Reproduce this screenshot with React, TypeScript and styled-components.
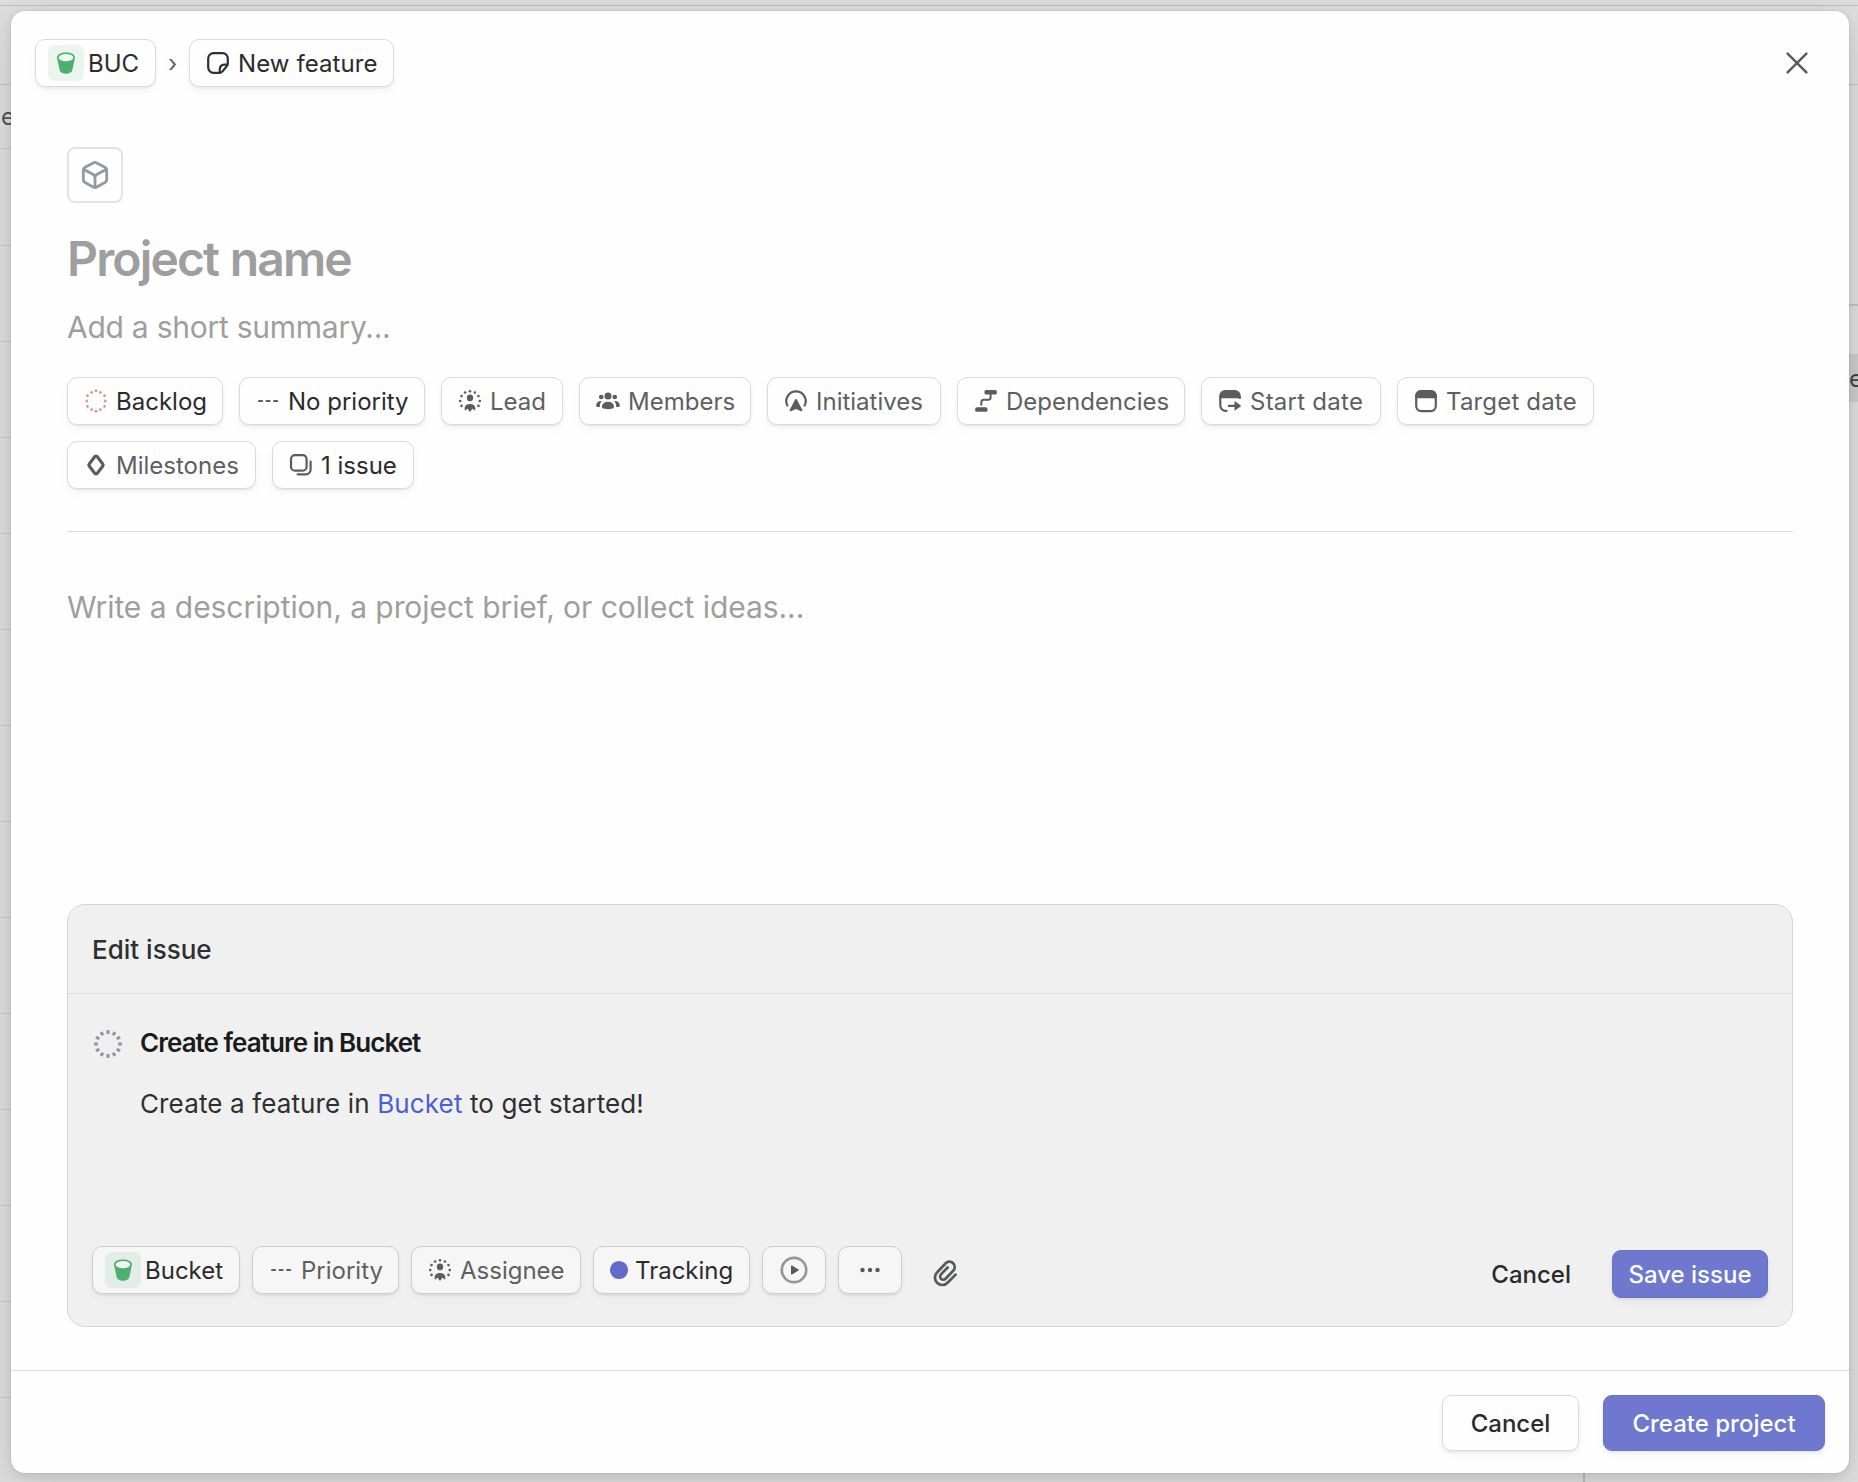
import React from "react";
import styled, { createGlobalStyle } from "styled-components";

const Global = createGlobalStyle`
  *, *::before, *::after { box-sizing: border-box; }
  html, body { margin: 0; padding: 0; overflow: hidden; }
  body {
    font-family: Inter, "Liberation Sans", sans-serif;
    color: #2f2f31;
    -webkit-font-smoothing: antialiased;
  }
`;

/* ---------- page behind the dialog ---------- */

const Page = styled.div`
  position: relative;
  display: flex;
  flex-direction: column;
  width: 1858px;
  height: 1482px;
  overflow: hidden;
  background: #dedede;
`;
const TopStrip = styled.div`
  height: 6px;
  flex: none;
  border-bottom: 1px solid #c0c0c1;
`;
const TitleStrip = styled.div`
  height: 79px;
  flex: none;
  border-bottom: 1px solid #c4c4c5;
`;
const Columns = styled.div`
  flex: 1;
  display: flex;
  min-height: 0;
`;
const List = styled.div`
  width: 1583px;
  flex: none;
  display: flex;
  flex-direction: column;
`;
const ListRow = styled.div<{ $h: number }>`
  height: ${(p) => p.$h}px;
  flex: none;
  display: flex;
  align-items: center;
  padding-left: 1px;
  font-size: 24px;
  color: #555;
  border-bottom: 1px solid #c8c8c9;
`;
const Side = styled.div`
  flex: 1;
  border-left: 2px solid #b9b9ba;
`;
const SideTop = styled.div`
  height: 221px;
  border-bottom: 2px solid #c0c0c1;
`;
const SideCell = styled.div`
  height: 48px;
  margin-top: 48px;
  display: flex;
  align-items: center;
  padding-left: 264px;
  font-size: 24px;
  color: #444;
  background: #cbcbcb;
`;

/* ---------- dialog ---------- */

const Overlay = styled.div`
  position: absolute;
  inset: 0;
  display: flex;
  padding: 11px 9px 9px 11px;
`;
const Dialog = styled.div`
  flex: 1;
  display: flex;
  flex-direction: column;
  border-radius: 14px;
  background: #fefefe;
  box-shadow: 0 0 0 1px rgba(0, 0, 0, 0.04), 0 3px 10px rgba(0, 0, 0, 0.08),
    0 8px 40px rgba(0, 0, 0, 0.12);
`;
const Header = styled.header`
  display: flex;
  align-items: center;
  height: 76px;
  padding: 28px 41px 0 24px;
`;
const Separator = styled.span`
  width: 33px;
  padding-top: 2px;
  text-align: center;
  font-size: 24px;
  line-height: 48px;
  color: #5e5f61;
`;
const CloseButton = styled.button`
  display: flex;
  margin-left: auto;
  padding: 0;
  border: 0;
  background: none;
  color: #5a5b5d;
`;
const Body = styled.main`
  flex: 1;
  display: flex;
  flex-direction: column;
  padding: 60px 56px 43px;
`;
const ProjectIcon = styled.div`
  width: 56px;
  height: 56px;
  display: grid;
  place-items: center;
  border: 2px solid #e3e3e4;
  border-radius: 8px;
  color: #9597a1;
`;
const ProjectName = styled.h1`
  margin: 27px 0 0;
  font-size: 48px;
  line-height: 58px;
  font-weight: 600;
  letter-spacing: -1.83px;
  word-spacing: 1.2px;
  color: #9e9e9f;
`;
const Placeholder = styled.p<{ $top: number; $tracking: number }>`
  margin: ${(p) => p.$top}px 0 0;
  font-size: 30px;
  line-height: 36px;
  letter-spacing: ${(p) => p.$tracking}px;
  color: #9e9e9f;
`;
const Properties = styled.div`
  display: flex;
  flex-wrap: wrap;
  gap: 16px;
  width: 1600px;
  margin-top: 32px;
`;
const Divider = styled.hr`
  width: 100%;
  height: 1px;
  margin: 42px 0 0;
  border: 0;
  background: #dcdcdd;
`;

const Chip = styled.button<{ $w: number; $muted?: boolean; $sunken?: boolean; $tile?: boolean; $center?: boolean }>`
  width: ${(p) => p.$w}px;
  height: 48px;
  flex: none;
  display: flex;
  align-items: center;
  justify-content: ${(p) => (p.$center ? "center" : "flex-start")};
  gap: ${(p) => (p.$tile ? 4 : 8)}px;
  padding: 0 0 0 ${(p) => (p.$center ? 0 : p.$tile ? 12 : 16)}px;
  border: 1px solid ${(p) => (p.$sunken ? "#cdcdce" : "#dadadb")};
  border-radius: 10px;
  background: ${(p) => (p.$sunken ? "#f6f6f6" : "#fefefe")};
  box-shadow: 0 2px 2px rgba(0, 0, 0, 0.05), 0 5px 10px rgba(0, 0, 0, 0.03);
  font: inherit;
  font-size: 24px;
  line-height: 30px;
  white-space: nowrap;
  color: ${(p) => (p.$muted ? "#5f5f61" : "#2b2b2d")};
`;
const Label = styled.span<{ $tracking?: number }>`
  padding-top: 2px;
  letter-spacing: ${(p) => p.$tracking ?? 0}px;
`;
const Tile = styled.span<{ $sunken?: boolean }>`
  width: 36px;
  height: 36px;
  display: grid;
  place-items: center;
  border-radius: 7px;
  background: ${(p) => (p.$sunken ? "#e1ede5" : "#e9f5ed")};
`;
const Glyph = styled.svg`
  display: block;
  flex: none;
  overflow: visible;
`;

const IssueCard = styled.section`
  height: 423px;
  margin-top: auto;
  display: flex;
  flex-direction: column;
  border: 1px solid #d6d6d7;
  border-radius: 18px;
  background: #f0f0f0;
`;
const IssueHeader = styled.div`
  height: 89px;
  display: flex;
  align-items: center;
  padding: 1px 24px 0;
  border-bottom: 1px solid #dadadb;
  font-size: 26px;
  font-weight: 500;
`;
const IssueMain = styled.div`
  display: flex;
  gap: 17px;
  padding: 33px 24px 0 25px;
`;
const IssueText = styled.div`
  flex: 1;
`;
const IssueTitle = styled.h2`
  margin: 0;
  font-size: 26px;
  line-height: 32px;
  font-weight: 600;
  letter-spacing: -0.96px;
  color: #1b1b1d;
`;
const IssueDescription = styled.p`
  margin: 29px 0 0;
  font-size: 26px;
  line-height: 32px;
  letter-spacing: 0.13px;
`;
const Mention = styled.span`
  color: #4a5fd0;
`;
const IssueFooter = styled.div`
  display: flex;
  align-items: center;
  gap: 12px;
  margin-top: auto;
  padding: 0 24px 28px;
`;
const AttachButton = styled.button`
  display: flex;
  margin: 5px 0 0 18px;
  padding: 0;
  border: 0;
  background: none;
  color: #58595b;
`;
const IssueActions = styled.div`
  display: flex;
  align-items: center;
  gap: 41px;
  margin: 8px 0 0 auto;
`;
const TextButton = styled.button`
  padding: 0;
  border: 0;
  background: none;
  font: inherit;
  font-size: 24px;
  font-weight: 500;
  color: #2b2b2d;
`;
const Primary = styled.button<{ $w: number; $h: number }>`
  width: ${(p) => p.$w}px;
  height: ${(p) => p.$h}px;
  padding: 0;
  border: 1px solid #6a72c6;
  border-radius: 9px;
  background: #6e78ce;
  box-shadow: 0 2px 3px rgba(0, 0, 0, 0.06), 0 5px 10px rgba(0, 0, 0, 0.03);
  font: inherit;
  font-size: 24px;
  font-weight: 500;
  color: #fdfdff;
`;
const Secondary = styled(Primary)`
  border-color: #dadadb;
  background: #fefefe;
  color: #2b2b2d;
`;
const Footer = styled.footer`
  height: 103px;
  display: flex;
  justify-content: flex-end;
  gap: 24px;
  padding: 24px 24px 0;
  border-top: 1px solid #dadadb;
`;

/* ---------- icons ---------- */

const ring = (n: number, r: number) =>
  Array.from({ length: n }, (_, i) => {
    const a = (i / n) * Math.PI * 2 - Math.PI / 2;
    return { x: Math.cos(a) * r, y: Math.sin(a) * r, deg: (i / n) * 360 };
  });

const BucketIcon = () => (
  <Glyph width="20" height="22" viewBox="0 0 20 22">
    <path d="M1 5.500C1 2.600 5 .6 10 .6s9 2 9 4.900c0 .5-.1 1-.3 1.500l-2.400 11.200C15.800 20.400 13.200 21.800 10 21.800s-5.800-1.400-6.300-3.600L1.300 7A5 5 0 0 1 1 5.500z" fill="#4fae70" />
    <ellipse cx="10" cy="5.600" rx="7.300" ry="3.600" fill="#eef7f1" />
  </Glyph>
);
const NoteIcon = () => (
  <Glyph width="24" height="24" viewBox="0 0 24 24" fill="none" stroke="#2f2f31" strokeWidth="2.200" strokeLinejoin="round">
    <path d="M14 21.800H7.500A5.300 5.300 0 0 1 2.200 16.500v-9A5.300 5.300 0 0 1 7.500 2.200h9a5.300 5.300 0 0 1 5.300 5.300V12.500c0 1.100-.4 2-1.100 2.800l-4.200 5.100c-.7.8-1.500 1.400-2.500 1.400z" />
    <path d="M13.800 21.500v-3.600a4.300 4.300 0 0 1 4.300-4.300h3.500" />
  </Glyph>
);
const CloseIcon = () => (
  <Glyph width="22" height="22" viewBox="0 0 22 22" fill="none" stroke="currentColor" strokeWidth="2.500" strokeLinecap="round">
    <path d="M1.600 1.600l18.800 18.800M20.400 1.600L1.600 20.400" />
  </Glyph>
);
const CubeIcon = () => (
  <Glyph width="28" height="28" viewBox="0 0 28 28" fill="none" stroke="currentColor" strokeWidth="2.800" strokeLinejoin="round" strokeLinecap="round">
    <path d="M12.300 1.900a3.500 3.500 0 0 1 3.400 0l8.300 4.300a3.200 3.200 0 0 1 1.700 2.800v9.800a3.200 3.200 0 0 1-1.700 2.800l-8.300 4.500a3.500 3.500 0 0 1-3.400 0L4 21.600a3.200 3.200 0 0 1-1.700-2.800V9A3.200 3.200 0 0 1 4 6.200z" />
    <path d="M3 8.500l11 6 11-6M14 14.500v12" />
    <path d="M12.200 13.600h3.600L14 17.500z" fill="currentColor" strokeWidth="1" />
  </Glyph>
);

/* twelve dots laid out along a rounded hexagon */
const hexDots = [
  [0, -10.300], [4.400, -8.600], [8.500, -5.400], [9.300, 0], [8.500, 5.400], [4.400, 8.600],
  [0, 10.300], [-4.400, 8.600], [-8.500, 5.400], [-9.300, 0], [-8.500, -5.400], [-4.400, -8.600],
];
const BacklogIcon = () => (
  <Glyph width="24" height="24" viewBox="-12 -12 24 24" fill="#ef8a7c">
    {hexDots.map(([x, y], i) => (
      <rect key={i} x="-1.300" y="-1.200" width="2.600" height="2.400" rx=".7" transform={`translate(${x} ${y}) rotate(${i * 30})`} />
    ))}
  </Glyph>
);
const StatusIcon = () => (
  <Glyph width="30" height="36" viewBox="-15 -17 30 36" fill="#97979f">
    {ring(12, 12).map((d) => (
      <rect key={d.deg} x="-1.500" y="-14" width="3" height="4" transform={`rotate(${d.deg})`} />
    ))}
  </Glyph>
);
const DashesIcon = () => (
  <Glyph width="24" height="24" viewBox="0 0 24 24" fill="#5f5f61">
    <rect x="2" y="10.900" width="5.200" height="2.200" rx="1" />
    <rect x="9.500" y="10.900" width="5.200" height="2.200" rx="1" />
    <rect x="17" y="10.900" width="5.200" height="2.200" rx="1" />
  </Glyph>
);
const PersonIcon = () => (
  <Glyph width="24" height="24" viewBox="-12 -12 24 24" fill="#5c5c5e">
    {ring(12, 9.800)
      .filter((d) => d.y < 7)
      .map((d) => (
        <circle key={d.deg} cx={d.x} cy={d.y} r="1.300" />
      ))}
    <rect x="-3.100" y="-6.500" width="6.200" height="6.800" rx="3" />
    <path d="M-5.300 6.800C-5 4.300-3 3 0 3s5 1.300 5.300 3.800c.2 1.200.1 2.700-.7 2.700-.8 0-1-1.700-2.100-1.700-1 0-1.300 3-2.500 3s-1.500-3-2.500-3c-1.100 0-1.300 1.700-2.100 1.700-.8 0-.9-1.500-.7-2.700z" />
  </Glyph>
);
const MembersIcon = () => (
  <Glyph width="24" height="24" viewBox="0 0 24 24" fill="#5c5c5e">
    <circle cx="12" cy="7.100" r="3.500" />
    <circle cx="5.200" cy="8" r="2.300" />
    <circle cx="18.800" cy="8" r="2.300" />
    <path d="M12 12.700c3.800 0 6 2.200 6 5.100 0 1.600-1.600 2.400-6 2.400s-6-.8-6-2.400c0-2.900 2.200-5.100 6-5.100z" />
    <path d="M5.800 12C3 11.400.2 13.200.1 16.600c0 1.300 1.800 1.600 3.700 1.400-.1-2.400.5-4.400 2-6zM18.200 12c2.800-.6 5.600 1.200 5.700 4.600 0 1.300-1.800 1.600-3.700 1.400.1-2.400-.5-4.400-2-6z" />
  </Glyph>
);
const InitiativesIcon = () => (
  <Glyph width="24" height="24" viewBox="0 0 24 24">
    <path d="M3.400 16.600A9.700 9.700 0 1 1 20.600 16.600" fill="none" stroke="#5c5c5e" strokeWidth="2.200" strokeLinecap="round" />
    <path d="M11.100 10.500c.3-.8 1.500-.8 1.800 0l5.400 10.400c.5 1-.3 1.700-1.200 1.300L12 20l-5.100 2.200c-.9.400-1.700-.3-1.200-1.300z" fill="#5c5c5e" />
  </Glyph>
);
const DependenciesIcon = () => (
  <Glyph width="24" height="24" viewBox="0 0 24 24" fill="#5c5c5e">
    <rect x="10.500" y="1" width="12.300" height="4.500" rx="1.600" />
    <rect x="1.200" y="18.300" width="12.300" height="4.500" rx="1.600" />
    <path d="M16.600 5v3.400a2.300 2.300 0 0 1-2.300 2.300H9.800a2.500 2.500 0 0 0-2.500 2.500v2.600" fill="none" stroke="#5c5c5e" strokeWidth="2" strokeLinecap="round" />
  </Glyph>
);
const StartDateIcon = () => (
  <Glyph width="24" height="24" viewBox="0 0 24 24">
    <path d="M1.200 9.200V7A6 6 0 0 1 7.200 1h9.600a6 6 0 0 1 6 6v2.200z" fill="#5c5c5e" />
    <path d="M2.300 8v8.500A5.300 5.300 0 0 0 7.600 21.800h1" fill="none" stroke="#5c5c5e" strokeWidth="2.200" strokeLinecap="round" />
    <path d="M21.700 8v1.800" fill="none" stroke="#5c5c5e" strokeWidth="2.200" />
    <path d="M10.800 16.900h8" fill="none" stroke="#5c5c5e" strokeWidth="2.200" strokeLinecap="round" />
    <path d="M17.300 12.500l5.200 3.700c.5.400.5 1 0 1.400l-5.200 3.700c-.4.200-.8.100-.8-.4V12.900c0-.5.400-.6.800-.4z" fill="#5c5c5e" />
  </Glyph>
);
const TargetDateIcon = () => (
  <Glyph width="24" height="24" viewBox="0 0 24 24">
    <rect x="2.200" y="2.100" width="19.600" height="20" rx="5" fill="none" stroke="#5c5c5e" strokeWidth="2.200" />
    <path d="M1.200 9.200V7A6 6 0 0 1 7.200 1h9.600a6 6 0 0 1 6 6v2.200z" fill="#5c5c5e" />
  </Glyph>
);
const MilestoneIcon = () => (
  <Glyph width="24" height="24" viewBox="0 0 24 24" fill="none" stroke="#5c5c5e" strokeWidth="3.100" strokeLinejoin="round">
    <path d="M10.900 3.500a1.400 1.400 0 0 1 2.200 0l5.700 7.500a1.600 1.600 0 0 1 0 2l-5.700 7.500a1.400 1.400 0 0 1-2.200 0L5.200 13a1.600 1.600 0 0 1 0-2z" />
  </Glyph>
);
const StackIcon = () => (
  <Glyph width="24" height="24" viewBox="0 0 24 24" fill="none" stroke="#5c5c5e" strokeWidth="2.200" strokeLinecap="round">
    <rect x="2" y="2.100" width="15.600" height="15.600" rx="4" />
    <path d="M21.600 8.500v8a4.800 4.800 0 0 1-4.800 4.800H8.600" />
  </Glyph>
);
const DotIcon = () => (
  <Glyph width="17" height="18" viewBox="0 0 17 18">
    <circle cx="9" cy="9" r="9.100" fill="#626bcb" />
  </Glyph>
);
const CycleIcon = () => (
  <Glyph width="28" height="28" viewBox="0 0 28 28">
    <circle cx="14" cy="14" r="12.200" fill="none" stroke="#979798" strokeWidth="2.700" />
    <path d="M11 10c0-.5.500-.8 1-.5l6.500 3.900c.5.300.5.800 0 1.100L12 18.400c-.5.300-1 0-1-.5z" fill="#58595b" />
  </Glyph>
);
const MoreIcon = () => (
  <Glyph width="24" height="24" viewBox="0 0 24 24" fill="#58595b">
    <circle cx="4.500" cy="12" r="2.200" />
    <circle cx="12" cy="12" r="2.200" />
    <circle cx="19.500" cy="12" r="2.200" />
  </Glyph>
);
const ClipIcon = () => (
  <Glyph width="26" height="28" viewBox="0 0 26 28" fill="none" stroke="currentColor" strokeWidth="2.700" strokeLinecap="round" strokeLinejoin="round">
    <path d="M23.600 15.600l-7.800 7.900a7.300 7.300 0 0 1-10.700.3 7.300 7.300 0 0 1 .1-10.500L13.700 4.300a5.200 5.200 0 0 1 7.500 0 5.200 5.200 0 0 1 0 7.400l-7.700 8.100a3.100 3.100 0 0 1-4.500 0 3.100 3.100 0 0 1 0-4.400l6.600-6.900" />
  </Glyph>
);

/* ---------- data ---------- */

type Property = { label: string; width: number; icon: React.ReactNode; muted?: boolean; tracking?: number };

const properties: Property[] = [
  { label: "Backlog", width: 156, icon: <BacklogIcon /> },
  { label: "No priority", width: 186, icon: <DashesIcon /> },
  { label: "Lead", width: 122, icon: <PersonIcon />, muted: true },
  { label: "Members", width: 172, icon: <MembersIcon />, muted: true },
  { label: "Initiatives", width: 174, icon: <InitiativesIcon />, muted: true },
  { label: "Dependencies", width: 228, icon: <DependenciesIcon />, muted: true },
  { label: "Start date", width: 180, icon: <StartDateIcon />, muted: true, tracking: 0.25 },
  { label: "Target date", width: 197, icon: <TargetDateIcon />, muted: true, tracking: 0.17 },
  { label: "Milestones", width: 189, icon: <MilestoneIcon />, muted: true },
  { label: "1 issue", width: 142, icon: <StackIcon /> },
];
const listRows = [97, 96, 96, 96, 96, 96, 96, 96, 96, 96, 96, 96, 96];

export default function App() {
  return (
    <>
      <Global />
      <Page>
        <TopStrip />
        <TitleStrip />
        <Columns>
          <List>
            <ListRow $h={64}>e</ListRow>
            {listRows.map((h, i) => (
              <ListRow key={i} $h={h} />
            ))}
          </List>
          <Side>
            <SideTop />
            <SideCell>e</SideCell>
          </Side>
        </Columns>
        <Overlay>
          <Dialog role="dialog">
            <Header>
              <Chip $w={121} $tile>
                <Tile>
                  <BucketIcon />
                </Tile>
                <Label>BUC</Label>
              </Chip>
              <Separator>›</Separator>
              <Chip $w={205}>
                <NoteIcon />
                <Label $tracking={0.1}>New feature</Label>
              </Chip>
              <CloseButton aria-label="Close">
                <CloseIcon />
              </CloseButton>
            </Header>
            <Body>
              <ProjectIcon>
                <CubeIcon />
              </ProjectIcon>
              <ProjectName>Project name</ProjectName>
              <Placeholder $top={21} $tracking={-0.25}>
                Add a short summary...
              </Placeholder>
              <Properties>
                {properties.map((p) => (
                  <Chip key={p.label} $w={p.width} $muted={p.muted}>
                    {p.icon}
                    <Label $tracking={p.tracking}>{p.label}</Label>
                  </Chip>
                ))}
              </Properties>
              <Divider />
              <Placeholder $top={57} $tracking={-0.06}>
                Write a description, a project brief, or collect ideas...
              </Placeholder>
              <IssueCard>
                <IssueHeader>Edit issue</IssueHeader>
                <IssueMain>
                  <StatusIcon />
                  <IssueText>
                    <IssueTitle>Create feature in Bucket</IssueTitle>
                    <IssueDescription>
                      Create a feature in <Mention>Bucket</Mention> to get started!
                    </IssueDescription>
                  </IssueText>
                </IssueMain>
                <IssueFooter>
                  <Chip $w={148} $sunken $tile>
                    <Tile $sunken>
                      <BucketIcon />
                    </Tile>
                    <Label>Bucket</Label>
                  </Chip>
                  <Chip $w={147} $sunken $muted>
                    <DashesIcon />
                    <Label>Priority</Label>
                  </Chip>
                  <Chip $w={170} $sunken $muted>
                    <PersonIcon />
                    <Label>Assignee</Label>
                  </Chip>
                  <Chip $w={157} $sunken>
                    <DotIcon />
                    <Label>Tracking</Label>
                  </Chip>
                  <Chip $w={64} $sunken $center aria-label="Cycle">
                    <CycleIcon />
                  </Chip>
                  <Chip $w={64} $sunken $center aria-label="More">
                    <MoreIcon />
                  </Chip>
                  <AttachButton aria-label="Attach">
                    <ClipIcon />
                  </AttachButton>
                  <IssueActions>
                    <TextButton>Cancel</TextButton>
                    <Primary $w={156} $h={48}>
                      Save issue
                    </Primary>
                  </IssueActions>
                </IssueFooter>
              </IssueCard>
            </Body>
            <Footer>
              <Secondary $w={137} $h={56}>
                Cancel
              </Secondary>
              <Primary $w={222} $h={56}>
                Create project
              </Primary>
            </Footer>
          </Dialog>
        </Overlay>
      </Page>
    </>
  );
}
